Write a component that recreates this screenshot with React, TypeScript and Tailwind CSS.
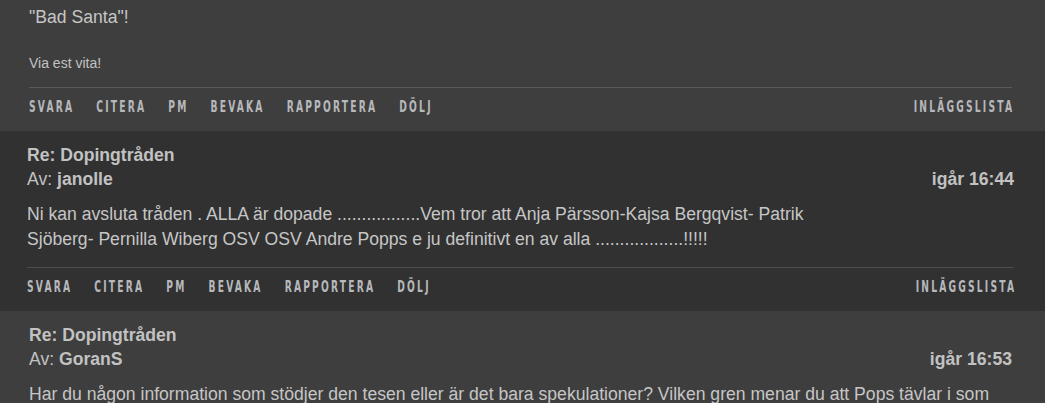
import React from 'react'

// Forum thread view: alternating post blocks with action bars

type Post = {
  title?: string
  author?: string
  time?: string
  body: React.ReactNode
  signature?: string
  dark: boolean
  actions?: boolean
}

const actions = ['Svara', 'Citera', 'PM', 'Bevaka', 'Rapportera', 'Dölj']

const posts: Post[] = [
  {
    body: <>"Bad Santa"!</>,
    signature: 'Via est vita!',
    dark: false,
    actions: true,
  },
  {
    title: 'Re: Dopingtråden',
    author: 'janolle',
    time: 'igår 16:44',
    body: (
      <>
        Ni kan avsluta tråden . ALLA är dopade .................Vem tror att Anja Pärsson-Kajsa Bergqvist- Patrik
        <br />
        Sjöberg- Pernilla Wiberg OSV OSV Andre Popps e ju definitivt en av alla ..................!!!!!
      </>
    ),
    dark: true,
    actions: true,
  },
  {
    title: 'Re: Dopingtråden',
    author: 'GoranS',
    time: 'igår 16:53',
    body: (
      <>
        Har du någon information som stödjer den tesen eller är det bara spekulationer? Vilken gren menar du att Pops tävlar i som
        <br />
        är så beroende av doping?
      </>
    ),
    dark: false,
    actions: false,
  },
]

const labelFont = { fontFamily: '"DejaVu Sans Condensed", "DejaVu Sans", sans-serif' }

function Label({ text, className = '' }: { text: string; className?: string }) {
  return (
    <span
      className={`uppercase font-bold text-[10.2px] tracking-[2.2px] text-[#b6b8bb] leading-[12px] inline-block scale-y-[1.6] origin-top ${className}`}
      style={labelFont}
    >
      {text}
    </span>
  )
}

function ActionBar({ dark }: { dark: boolean }) {
  return (
    <div
      className={`flex items-start h-[44px] pt-[10px] border-t ${
        dark ? 'border-[#4e4e4e]' : 'border-[#5a5a5a]'
      }`}
    >
      <div className="flex gap-[22px]">
        {actions.map((a) => (
          <Label key={a} text={a} />
        ))}
      </div>
      <Label text="Inläggslista" className="ml-auto -mr-[2.2px]" />
    </div>
  )
}

function PostBlock({ post, first }: { post: Post; first: boolean }) {
  return (
    <div
      className={
        post.dark
          ? 'bg-[#313131] pl-[27px] pr-[31px]'
          : 'bg-[#3e3e3e] pl-[29px] pr-[33px]'
      }
    >
      <div className={first ? 'pt-[5px]' : 'pt-[12px]'}>
        {post.title && (
          <div className="text-[17.6px] leading-[24px] font-bold text-[#c2c2c2]">{post.title}</div>
        )}
        {post.author && (
          <div className="flex text-[17.6px] leading-[24px] text-[#c2c2c2]">
            <span>
              Av: <b>{post.author}</b>
            </span>
            <b className="ml-auto">{post.time}</b>
          </div>
        )}
        <div className={`text-[17.6px] leading-[25.6px] text-[#c6c6c6] ${post.title ? 'mt-[11px]' : ''}`}>
          {post.body}
        </div>
        {post.signature && (
          <div className="mt-[22px] text-[14px] leading-[20px] text-[#c2c2c2]">{post.signature}</div>
        )}
      </div>
      {post.actions && (
        <div className="mt-[14px]">
          <ActionBar dark={post.dark} />
        </div>
      )}
    </div>
  )
}

export default function App() {
  return (
    <div
      className="w-[1045px] h-[403px] overflow-hidden bg-[#3e3e3e]"
      style={{ fontFamily: '"Liberation Sans", Arial, sans-serif' }}
    >
      {posts.map((p, i) => (
        <PostBlock key={i} post={p} first={i === 0} />
      ))}
    </div>
  )
}
